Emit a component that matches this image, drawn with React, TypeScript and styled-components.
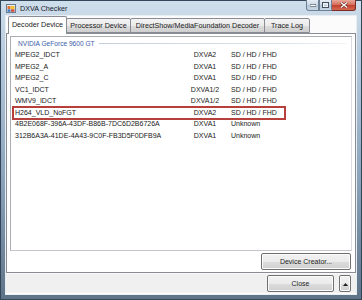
import styled, { createGlobalStyle } from "styled-components";

const GlobalStyle = createGlobalStyle`
  html, body {
    margin: 0;
    padding: 0;
    background: #25313d;
  }
  body {
    font-family: "Liberation Sans", Arial, sans-serif;
    color: #1a1a1a;
  }
`;

const Window = styled.div`
  width: 362px;
  height: 300px;
  box-sizing: border-box;
  display: flex;
  flex-direction: column;
  padding: 0 4px 4px 4px;
  border: 1px solid #34475a;
  background: linear-gradient(180deg, #cfdeeb 0%, #b3c8dc 20%, #8aa3ba 60%, #5d7388 100%);
`;

const TitleBar = styled.div`
  height: 14px;
  display: flex;
  align-items: center;
  gap: 4px;
  padding-left: 1px;
`;

const Title = styled.span`
  font-size: 7.2px;
  color: #16212c;
`;

const CaptionButtons = styled.div`
  display: flex;
  align-self: flex-start;
  margin-left: auto;
  margin-right: 1px;
  margin-top: -1px;
`;

const CaptionButton = styled.div<{ $close?: boolean }>`
  width: ${(p) => (p.$close ? "24px" : "13px")};
  height: 11px;
  box-sizing: border-box;
  display: flex;
  align-items: center;
  justify-content: center;
  border: 1px solid ${(p) => (p.$close ? "#7a2b22" : "#6d7f92")};
  border-top: none;
  border-left-width: ${(p) => (p.$close ? "0" : "1px")};
  border-radius: ${(p) => (p.$close ? "0 0 3px 0" : "0")};
  background: ${(p) =>
    p.$close
      ? "linear-gradient(180deg, #e9a99c 0%, #d7705f 45%, #c4412f 55%, #d56a52 100%)"
      : "linear-gradient(180deg, #e6eef6 0%, #ccdae8 45%, #b5c8da 55%, #c9d8e6 100%)"};
  &:first-child {
    border-radius: 0 0 0 3px;
  }
`;

const Client = styled.div`
  flex: 1;
  display: flex;
  flex-direction: column;
  background: #fbfbfb;
  border: 1px solid #e9eef3;
`;

const TabStrip = styled.div`
  display: flex;
  align-items: flex-end;
  height: 17px;
  padding-left: 2px;
`;

const Tab = styled.div<{ $active?: boolean; $w: number }>`
  width: ${(p) => p.$w}px;
  height: ${(p) => (p.$active ? "18px" : "15px")};
  box-sizing: border-box;
  display: flex;
  align-items: center;
  justify-content: center;
  font-size: 7.2px;
  border: 1px solid #898c95;
  border-bottom: ${(p) => (p.$active ? "none" : "1px solid #898c95")};
  margin-left: ${(p) => (p.$active ? "0" : "-1px")};
  margin-bottom: ${(p) => (p.$active ? "-1px" : "0")};
  border-radius: 2px 2px 0 0;
  position: relative;
  z-index: ${(p) => (p.$active ? 2 : 1)};
  padding-bottom: ${(p) => (p.$active ? "2px" : "0")};
  background: ${(p) =>
    p.$active ? "#ffffff" : "linear-gradient(180deg, #f3f3f3 0%, #ebebeb 50%, #dddddd 51%, #cfcfcf 100%)"};
`;

const Panel = styled.div`
  height: 240px;
  box-sizing: border-box;
  display: flex;
  flex-direction: column;
  gap: 2px;
  padding: 2px 3px 2px 3px;
  border: 1px solid #898c95;
  background: #ffffff;
  position: relative;
  z-index: 1;
`;

const ListBox = styled.div`
  height: 215px;
  box-sizing: border-box;
  border: 1px solid #abadb3;
  border-right-color: #dadce2;
  border-bottom-color: #c3c6cc;
  padding-top: 1px;
  background: #ffffff;
`;

const GroupHeader = styled.div`
  height: 11px;
  display: flex;
  align-items: center;
  gap: 4px;
  padding: 0 4px 0 7px;
  font-size: 6.6px;
  color: #3a5ca8;
`;

const HeaderLine = styled.div`
  flex: 1;
  height: 1px;
  background: linear-gradient(90deg, #c4cfe0 0%, #dfe5ef 80%, #f4f6f9 100%);
`;

const Row = styled.div<{ $marked?: boolean }>`
  height: 11.5px;
  display: grid;
  grid-template-columns: 169px 42px auto;
  align-items: center;
  padding-left: 4px;
  font-size: 7px;
  position: relative;

  &::after {
    content: "";
    display: ${(p) => (p.$marked ? "block" : "none")};
    position: absolute;
    left: 1px;
    width: 274px;
    top: -1px;
    bottom: -2px;
    box-sizing: border-box;
    border: 2px solid #b8403c;
  }
`;

const Api = styled.span`
  text-align: center;
`;

const Res = styled.span`
  padding-left: 5px;
`;

const Button = styled.button<{ $w: number }>`
  width: ${(p) => p.$w}px;
  height: 17px;
  box-sizing: border-box;
  padding: 0;
  font-family: "Liberation Sans", Arial, sans-serif;
  font-size: 7px;
  color: #1e1e1e;
  border: 1px solid #707070;
  border-radius: 2px;
  background: linear-gradient(180deg, #f2f2f2 0%, #ebebeb 50%, #dddddd 51%, #cfcfcf 100%);
  box-shadow: inset 0 0 0 1px #fbfbfb;
`;

const CreatorButton = styled(Button)`
  align-self: flex-end;
  margin-right: 1px;
`;

const Footer = styled.div`
  flex: 1;
  display: flex;
  align-items: center;
  justify-content: flex-end;
  gap: 5px;
  padding-right: 5px;
  background: #f0f0f0;
  border-top: 1px solid #fafafa;
  border-bottom: 1px solid #ffffff;
`;

const rows = [
  { name: "MPEG2_IDCT", api: "DXVA2", res: "SD / HD / FHD" },
  { name: "MPEG2_A", api: "DXVA1", res: "SD / HD / FHD" },
  { name: "MPEG2_C", api: "DXVA1", res: "SD / HD / FHD" },
  { name: "VC1_IDCT", api: "DXVA1/2", res: "SD / HD / FHD" },
  { name: "WMV9_IDCT", api: "DXVA1/2", res: "SD / HD / FHD" },
  { name: "H264_VLD_NoFGT", api: "DXVA2", res: "SD / HD / FHD", marked: true },
  { name: "4B2E068F-396A-43DF-B86B-7DC6D2B6726A", api: "DXVA1", res: "Unknown" },
  { name: "312B6A3A-41DE-4A43-9C0F-FB3D5F0DFB9A", api: "DXVA1", res: "Unknown" },
];

const tabs = [
  { label: "Decoder Device", w: 59, active: true },
  { label: "Processor Device", w: 65 },
  { label: "DirectShow/MediaFoundation Decoder", w: 135 },
  { label: "Trace Log", w: 46 },
];

function AppIcon() {
  return (
    <svg width="10" height="9" viewBox="0 0 10 9">
      <rect x="0.5" y="0.5" width="9" height="8" fill="#e9eef4" stroke="#6a7b8c" />
      <rect x="1.5" y="2" width="3" height="3" fill="#e8742c" />
      <rect x="5" y="2" width="3.5" height="3" fill="#f2c230" />
      <rect x="1.5" y="5.3" width="3" height="2.5" fill="#3f78c8" />
      <rect x="5" y="5.3" width="3.5" height="2.5" fill="#d04a3a" />
    </svg>
  );
}

function App() {
  return (
    <>
      <GlobalStyle />
      <Window>
        <TitleBar>
          <AppIcon />
          <Title>DXVA Checker</Title>
          <CaptionButtons>
            <CaptionButton>
              <svg width="6" height="3" viewBox="0 0 6 3">
                <rect x="0" y="0.5" width="6" height="2" fill="#fff" stroke="#44505c" strokeWidth="0.6" />
              </svg>
            </CaptionButton>
            <CaptionButton>
              <svg width="7" height="6" viewBox="0 0 7 6">
                <rect x="0.5" y="0.5" width="6" height="5" fill="none" stroke="#44505c" strokeWidth="1" />
                <rect x="1.5" y="1.8" width="4" height="2.8" fill="none" stroke="#fff" strokeWidth="0.8" />
              </svg>
            </CaptionButton>
            <CaptionButton $close>
              <svg width="8" height="6" viewBox="0 0 8 6">
                <path d="M1 0.5 L7 5.5 M7 0.5 L1 5.5" stroke="#5a1a12" strokeWidth="2.4" />
                <path d="M1 0.5 L7 5.5 M7 0.5 L1 5.5" stroke="#ffffff" strokeWidth="1.4" />
              </svg>
            </CaptionButton>
          </CaptionButtons>
        </TitleBar>
        <Client>
          <TabStrip>
            {tabs.map((t) => (
              <Tab key={t.label} $w={t.w} $active={t.active}>
                {t.label}
              </Tab>
            ))}
          </TabStrip>
          <Panel>
            <ListBox>
              <GroupHeader>
                <span>NVIDIA GeForce 9600 GT</span>
                <HeaderLine />
              </GroupHeader>
              {rows.map((r) => (
                <Row key={r.name} $marked={r.marked}>
                  <span>{r.name}</span>
                  <Api>{r.api}</Api>
                  <Res>{r.res}</Res>
                </Row>
              ))}
            </ListBox>
            <CreatorButton $w={90}>Device Creator...</CreatorButton>
          </Panel>
          <Footer>
            <Button $w={67}>Close</Button>
            <Button $w={12}>
              <svg width="5" height="3" viewBox="0 0 5 3">
                <path d="M0 3 L2.5 0 L5 3 Z" fill="#1e1e1e" />
              </svg>
            </Button>
          </Footer>
        </Client>
      </Window>
    </>
  );
}

export default App;
